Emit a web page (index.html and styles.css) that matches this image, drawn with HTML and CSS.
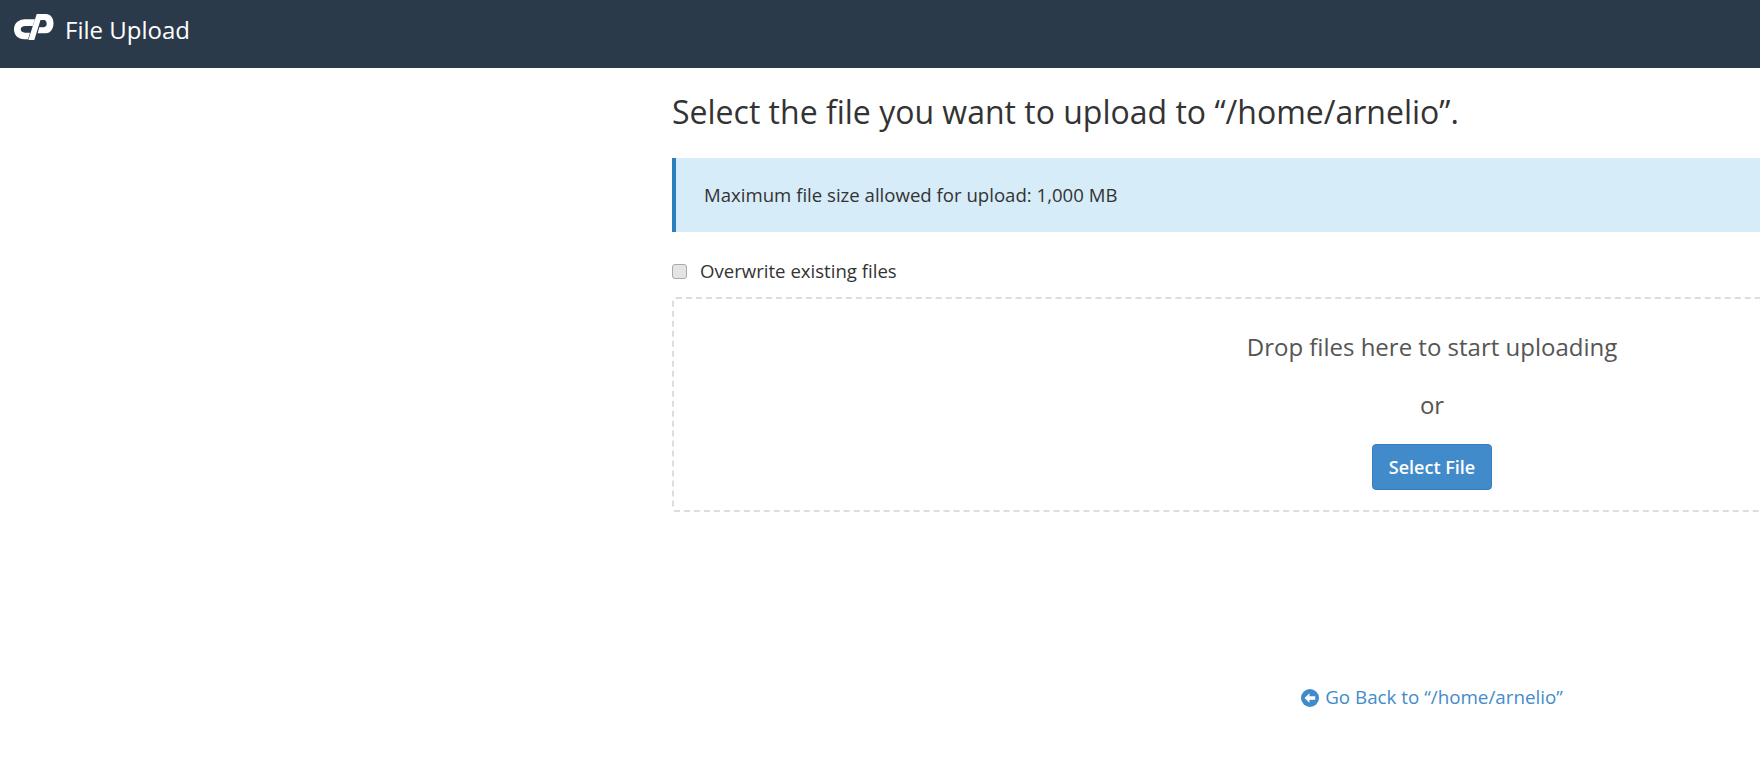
FILE: index.html
```html
<!DOCTYPE html>
<html lang="en">

<head>
    <meta charset="UTF-8">
    <title>File Upload</title>
    <link rel="stylesheet" href="styles.css">
</head>

<body>

    <header class="top-bar">
        <svg class="logo" viewBox="0 0 40 26" width="40" height="26" aria-label="cPanel">
            <path d="M11 5.3H21L18.7 12H11.5C8.5 12 6.7 13.5 6.7 15.3S8.5 18.7 11 18.7H16L14 25.3H10.5C4 25.3 0 21 0 15.3S4.5 5.3 11 5.3Z" fill="#fff"/>
            <path d="M22.7 0H32C36.5 0 39.5 4 39.5 9.3S36.5 19.3 32 19.3H23.7L25.3 13.3H29.3C31.5 13.3 32.7 11.8 32.7 10S31.8 6 30 6H26.5L20.3 26H14.3Z" fill="#fff"/>
        </svg>
        <span class="top-title">File Upload</span>
    </header>

    <main class="content">
        <h1>Select the file you want to upload to “/home/arnelio”.</h1>

        <div class="alert">Maximum file size allowed for upload: 1,000 MB</div>

        <label class="overwrite">
            <input type="checkbox">
            <span>Overwrite existing files</span>
        </label>

        <div class="drop-zone">
            <div class="drop-text">Drop files here to start uploading</div>
            <div class="drop-or">or</div>
            <button class="btn-select" type="button">Select File</button>
        </div>

        <div class="back-row">
            <a class="back-link" href="#">
                <svg class="back-icon" viewBox="0 0 18 18" width="18" height="18">
                    <circle cx="9" cy="9" r="9" fill="#428bca"/>
                    <path d="M3.5 9 8.5 4.3v2.9h5.7v3.6H8.5v2.9z" fill="#fff"/>
                </svg>
                Go Back to “/home/arnelio”
            </a>
        </div>
    </main>

</body>

</html>
```

FILE: styles.css
```css
html,
body {
    margin: 0;
    height: 100%;
    overflow: hidden;
    background-color: #fff;
}

body {
    font-family: 'Open Sans', 'Noto Sans', sans-serif;
    color: #333;
}

.top-bar {
    display: flex;
    align-items: center;
    height: 68px;
    padding-left: 14px;
    background-color: #2b3a4a;
    color: #fff;
}

.logo {
    margin-right: 11px;
    margin-bottom: 14px;
}

.top-title {
    font-size: 24px;
    margin-bottom: 10px;
}

.content {
    width: 1520px;
    margin-left: 672px;
}

h1 {
    margin: 23px 0 0;
    font-size: 32px;
    line-height: 41px;
    font-weight: 400;
}

.alert {
    margin-top: 26px;
    height: 74px;
    padding-left: 28px;
    border-left: 4px solid #2a7fbd;
    background-color: #d6ecf9;
    font-size: 18.6px;
    line-height: 74px;
}

.overwrite {
    display: flex;
    align-items: center;
    margin-top: 27px;
    font-size: 18.6px;
    line-height: 24px;
}

.overwrite input {
    appearance: none;
    width: 15px;
    height: 15px;
    margin: 0 13px 0 0;
    border: 1px solid #aaa;
    border-radius: 3px;
    background-color: #e4e4e4;
}

.drop-zone {
    margin-top: 14px;
    height: 215px;
    box-sizing: border-box;
    padding-top: 31px;
    border: 2px dashed #ddd;
    border-radius: 4px;
    text-align: center;
    color: #555;
}

.drop-text {
    font-size: 24px;
    line-height: 33px;
}

.drop-or {
    margin-top: 25px;
    font-size: 24px;
    line-height: 33px;
}

.btn-select {
    margin-top: 23px;
    width: 120px;
    height: 46px;
    border: 1px solid #357ebd;
    border-radius: 4px;
    background-color: #428bca;
    color: #fff;
    font-family: inherit;
    font-size: 18px;
    font-weight: 600;
}

.back-row {
    margin-top: 173px;
    text-align: center;
}

.back-link {
    display: inline-flex;
    align-items: center;
    gap: 6px;
    color: #428bca;
    font-size: 18.8px;
    line-height: 25px;
    text-decoration: none;
}
```
